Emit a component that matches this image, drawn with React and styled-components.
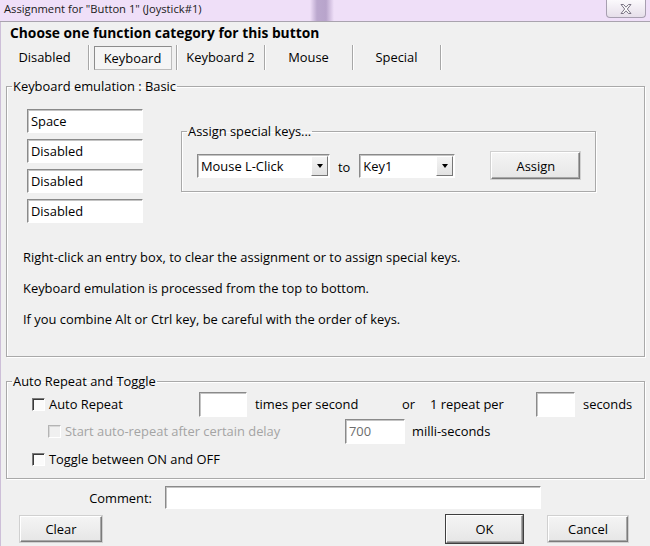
import styled, { createGlobalStyle } from 'styled-components';

const GlobalStyle = createGlobalStyle`
  html, body {
    margin: 0;
    padding: 0;
    background: #f0f0f0;
  }
  body {
    font-family: 'Open Sans', 'Noto Sans', sans-serif;
    font-size: 12.9px;
    color: #000;
  }
  * {
    box-sizing: border-box;
  }
`;

const Window = styled.div`
  width: 650px;
  height: 546px;
  overflow: hidden;
  display: flex;
  flex-direction: column;
  background: #f0f0f0;
`;

const TitleBar = styled.div`
  flex: none;
  height: 22px;
  display: flex;
  align-items: flex-start;
  padding-left: 4px;
  background: linear-gradient(
    90deg,
    #efdff8 0,
    #efdff8 310px,
    #bba8ce 317px,
    #b8a4cb 326px,
    #efdff8 334px,
    #efdff8 100%
  );
  border-bottom: 1px solid #a9a3ae;
`;

const Title = styled.span`
  font-size: 11.2px;
  line-height: 18px;
  color: #1a1a1a;
`;

const CloseButton = styled.div`
  margin-left: auto;
  margin-right: 4px;
  width: 40px;
  height: 18px;
  border: 1px solid #a79fb0;
  border-top: none;
  border-radius: 0 0 4px 4px;
  background: linear-gradient(#fbf9fc, #e6dfea);
  display: flex;
  align-items: center;
  justify-content: center;
`;

const Body = styled.div`
  flex: 1;
  display: flex;
  flex-direction: column;
  border-left: 1px solid #cdbfd8;
`;

const Heading = styled.div`
  margin: 2px 0 0 9px;
  font-size: 13.8px;
  font-weight: 700;
  line-height: 18px;
`;

const Tabs = styled.div`
  display: flex;
  height: 25px;
  margin-top: 3px;
`;

const Tab = styled.div`
  width: 88px;
  display: flex;
  align-items: center;
  justify-content: center;
  padding-bottom: 2px;
  border-right: 1px solid #a7a7a7;
  box-shadow: 1px 0 0 #fff;
`;

const ActiveTab = styled.div`
  width: 78px;
  height: 24px;
  margin-top: 2px;
  display: flex;
  align-items: center;
  justify-content: center;
  border: 1px solid #8c8c8c;
  border-right-color: #bdbdbd;
  border-bottom-color: #bdbdbd;
  background: #f5f5f5;
`;

const Group = styled.fieldset`
  margin: ${(p) => p.$top}px 5px 0 5px;
  padding: ${(p) => p.$padTop}px 0 0 5px;
  border: 1px solid #a9a9a9;
  box-shadow: inset 1px 1px 0 #fff, 1px 1px 0 #fff;
  min-width: 0;
  height: ${(p) => p.$height}px;
`;

const Legend = styled.legend`
  margin-left: 0;
  padding: 0 1px;
  line-height: 16px;
`;

const KeyRow = styled.div`
  display: flex;
  align-items: flex-start;
  margin-left: 15px;
`;

const KeyColumn = styled.div`
  display: flex;
  flex-direction: column;
  gap: 6px;
`;

const Field = styled.div`
  width: ${(p) => p.$w}px;
  height: ${(p) => p.$h || 24}px;
  background: #fff;
  border: 1px solid #fff;
  border-top-color: #8a8a8a;
  border-left-color: #8a8a8a;
  box-shadow: inset 1px 1px 0 #c4c4c4;
  padding: 0 3px;
  display: flex;
  align-items: center;
  color: ${(p) => (p.$dim ? '#6d6d6d' : '#000')};
`;

const SpecialGroup = styled.fieldset`
  margin: 14px 0 0 38px;
  padding: 13px 0 0 5px;
  width: 415px;
  height: 69px;
  border: 1px solid #a9a9a9;
  box-shadow: inset 1px 1px 0 #fff, 1px 1px 0 #fff;
  min-width: 0;
`;

const SpecialRow = styled.div`
  display: flex;
  align-items: center;
  margin-left: 10px;
`;

const Select = styled.div`
  width: ${(p) => p.$w}px;
  height: 24px;
  display: flex;
  background: #fff;
  border: 1px solid #fff;
  border-top-color: #8a8a8a;
  border-left-color: #8a8a8a;
  box-shadow: inset 1px 1px 0 #c4c4c4;
`;

const SelectText = styled.span`
  flex: 1;
  padding: 1px 0 0 3px;
  display: flex;
  align-items: center;
`;

const Arrow = styled.span`
  width: 17px;
  margin: 1px 1px 1px 0;
  background: linear-gradient(#f4f4f4, #e2e2e2);
  border: 1px solid #fff;
  border-right-color: #777;
  border-bottom-color: #777;
  display: flex;
  align-items: center;
  justify-content: center;
  &::after {
    content: '';
    border-left: 3px solid transparent;
    border-right: 3px solid transparent;
    border-top: 4px solid #000;
  }
`;

const To = styled.span`
  margin: 2px 9px 0 8px;
`;

const Button = styled.div`
  width: ${(p) => p.$w}px;
  height: ${(p) => p.$h || 27}px;
  margin-left: ${(p) => p.$ml || 0}px;
  display: flex;
  align-items: center;
  justify-content: center;
  background: linear-gradient(#f4f4f4, #e6e6e6);
  border: 1px solid #fff;
  border-right-color: #7b7b7b;
  border-bottom-color: #7b7b7b;
  box-shadow: ${(p) =>
    p.$default
      ? '0 0 0 1px #3f3f3f, inset -1px -1px 0 #a8a8a8'
      : 'inset -1px -1px 0 #a8a8a8, 0 0 0 1px #d0d0d0'};
`;

const Notes = styled.div`
  margin: 19px 0 0 11px;
  display: flex;
  flex-direction: column;
`;

const Note = styled.div`
  line-height: 31px;
`;

const RepeatRow = styled.div`
  display: flex;
  align-items: center;
  height: ${(p) => p.$h}px;
  padding-left: ${(p) => p.$indent}px;
`;

const Check = styled.label`
  width: ${(p) => p.$w}px;
  display: flex;
  align-items: center;
  gap: 4px;
  color: ${(p) => (p.$disabled ? '#a4a4a4' : '#000')};
`;

const Box = styled.span`
  width: 13px;
  height: 13px;
  flex: none;
  background: ${(p) => (p.$disabled ? '#f0f0f0' : '#fbfbfb')};
  border: 1px solid #fff;
  border-top-color: ${(p) => (p.$disabled ? '#b4b4b4' : '#7a7a7a')};
  border-left-color: ${(p) => (p.$disabled ? '#b4b4b4' : '#7a7a7a')};
  box-shadow: inset 1px 1px 0 ${(p) => (p.$disabled ? '#d8d8d8' : '#3a3a3a')};
`;

const Cell = styled.span`
  width: ${(p) => (p.$w ? `${p.$w}px` : 'auto')};
  flex: none;
  padding-left: ${(p) => p.$pl || 0}px;
`;

const CommentRow = styled.div`
  display: flex;
  align-items: center;
  margin-top: 7px;
  height: 23px;
`;

const CommentLabel = styled.span`
  width: 151px;
  text-align: right;
  margin-right: 13px;
`;

const ButtonRow = styled.div`
  display: flex;
  align-items: center;
  margin-top: 6px;
  padding-left: 19px;
`;

const CloseIcon = () => (
  <svg width="14" height="12" viewBox="0 0 14 12">
    <path
      d="M2 1.5 L4.5 1.5 L7 4.2 L9.5 1.5 L12 1.5 L8.3 6 L12 10.5 L9.5 10.5 L7 7.8 L4.5 10.5 L2 10.5 L5.7 6 Z"
      fill="#fff"
      stroke="#7a7384"
      strokeWidth="1"
      strokeLinejoin="round"
    />
  </svg>
);

const CheckItem = ({ label, width, disabled }) => (
  <Check $w={width} $disabled={disabled}>
    <Box $disabled={disabled} />
    {label}
  </Check>
);

const tabs = ['Disabled', 'Keyboard', 'Keyboard 2', 'Mouse', 'Special'];
const keys = ['Space', 'Disabled', 'Disabled', 'Disabled'];
const notes = [
  'Right-click an entry box, to clear the assignment or to assign special keys.',
  'Keyboard emulation is processed from the top to bottom.',
  'If you combine Alt or Ctrl key, be careful with the order of keys.',
];

export default function App() {
  return (
    <Window>
      <GlobalStyle />
      <TitleBar>
        <Title>Assignment for "Button 1" (Joystick#1)</Title>
        <CloseButton>
          <CloseIcon />
        </CloseButton>
      </TitleBar>
      <Body>
        <Heading>Choose one function category for this button</Heading>
        <Tabs>
          {tabs.map((t) => (
            <Tab key={t}>{t === 'Keyboard' ? <ActiveTab>{t}</ActiveTab> : t}</Tab>
          ))}
        </Tabs>

        <Group $top={8} $padTop={15} $height={279}>
          <Legend>Keyboard emulation : Basic</Legend>
          <KeyRow>
            <KeyColumn>
              {keys.map((k, i) => (
                <Field key={i} $w={116}>
                  {k}
                </Field>
              ))}
            </KeyColumn>
            <SpecialGroup>
              <Legend>Assign special keys...</Legend>
              <SpecialRow>
                <Select $w={133}>
                  <SelectText>Mouse L-Click</SelectText>
                  <Arrow />
                </Select>
                <To>to</To>
                <Select $w={96}>
                  <SelectText>Key1</SelectText>
                  <Arrow />
                </Select>
                <Button $w={89} $ml={36}>
                  Assign
                </Button>
              </SpecialRow>
            </SpecialGroup>
          </KeyRow>
          <Notes>
            {notes.map((n) => (
              <Note key={n}>{n}</Note>
            ))}
          </Notes>
        </Group>

        <Group $top={16} $padTop={2} $height={106}>
          <Legend>Auto Repeat and Toggle</Legend>
          <RepeatRow $h={26} $indent={20}>
            <CheckItem label="Auto Repeat" width={167} />
            <Field $w={48} $h={25} />
            <Cell $w={155} $pl={8}>times per second</Cell>
            <Cell $w={28}>or</Cell>
            <Cell $w={106}>1 repeat per</Cell>
            <Field $w={39} $h={25} />
            <Cell $pl={8}>seconds</Cell>
          </RepeatRow>
          <RepeatRow $h={28} $indent={36}>
            <CheckItem label="Start auto-repeat after certain delay" width={297} disabled />
            <Field $w={60} $h={25} $dim>
              700
            </Field>
            <Cell $pl={7}>milli-seconds</Cell>
          </RepeatRow>
          <RepeatRow $h={28} $indent={20}>
            <CheckItem label="Toggle between ON and OFF" width={250} />
          </RepeatRow>
        </Group>

        <CommentRow>
          <CommentLabel>Comment:</CommentLabel>
          <Field $w={376} $h={23} />
        </CommentRow>
        <ButtonRow>
          <Button $w={82} $h={26}>
            Clear
          </Button>
          <Button $w={77} $h={28} $ml={344} $default>
            OK
          </Button>
          <Button $w={80} $h={26} $ml={25}>
            Cancel
          </Button>
        </ButtonRow>
      </Body>
    </Window>
  );
}
